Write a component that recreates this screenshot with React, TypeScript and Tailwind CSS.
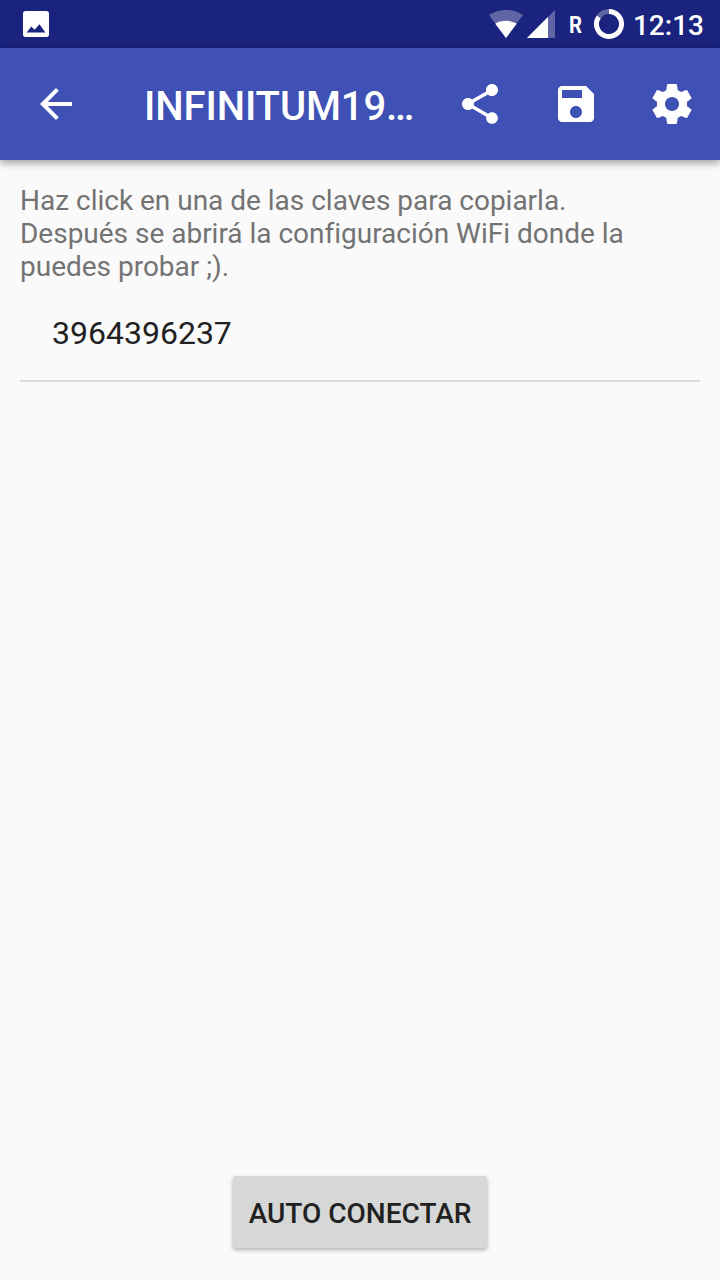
const paths = {
  back: "M20 11H7.83l5.59-5.59L12 4l-8 8 8 8 1.41-1.41L7.83 13H20v-2z",
  share: "M18 16.08c-.76 0-1.44.3-1.96.77L8.91 12.7c.05-.23.09-.46.09-.7s-.04-.47-.09-.7l7.05-4.11c.54.5 1.25.81 2.04.81 1.66 0 3-1.34 3-3s-1.34-3-3-3-3 1.34-3 3c0 .24.04.47.09.7L8.04 9.81C7.5 9.31 6.79 9 6 9c-1.66 0-3 1.34-3 3s1.34 3 3 3c.79 0 1.5-.31 2.04-.81l7.12 4.16c-.05.21-.08.43-.08.65 0 1.61 1.31 2.92 2.92 2.92s2.92-1.31 2.92-2.92-1.31-2.92-2.92-2.92z",
  save: "M17 3H5c-1.11 0-2 .9-2 2v14c0 1.1.89 2 2 2h14c1.1 0 2-.9 2-2V7l-4-4zm-5 16c-1.66 0-3-1.34-3-3s1.34-3 3-3 3 1.34 3 3-1.34 3-3 3zm3-10H5V5h10v4z",
  settings: "M19.43 12.98c.04-.32.07-.64.07-.98s-.03-.66-.07-.98l2.11-1.65c.19-.15.24-.42.12-.64l-2-3.46c-.12-.22-.39-.3-.61-.22l-2.49 1c-.52-.4-1.08-.73-1.69-.98l-.38-2.65C14.46 2.18 14.25 2 14 2h-4c-.25 0-.46.18-.49.42l-.38 2.65c-.61.25-1.17.59-1.69.98l-2.49-1c-.23-.09-.49 0-.61.22l-2 3.46c-.13.22-.07.49.12.64l2.11 1.65c-.04.32-.07.65-.07.98s.03.66.07.98l-2.11 1.65c-.19.15-.24.42-.12.64l2 3.46c.12.22.39.3.61.22l2.49-1c.52.4 1.08.73 1.69.98l.38 2.65c.03.24.24.42.49.42h4c.25 0 .46-.18.49-.42l.38-2.65c.61-.25 1.17-.59 1.69-.98l2.49 1c.23.09.49 0 .61-.22l2-3.46c.12-.22.07-.49-.12-.64l-2.11-1.65zM12 15.5c-1.93 0-3.5-1.57-3.5-3.5s1.57-3.5 3.5-3.5 3.5 1.57 3.5 3.5-1.57 3.5-3.5 3.5z",
};

function Icon({ path, className }: { path: string; className: string }) {
  return (
    <svg viewBox="0 0 24 24" fill="currentColor" className={className} aria-hidden="true">
      <path d={path} />
    </svg>
  );
}

function StatusBar() {
  return (
    <div className="flex h-12 items-center justify-between bg-[#1a237e] pr-4 pl-[23px] text-white">
      <svg width="26" height="26" viewBox="0 0 26 26" fill="white" aria-hidden="true">
        <rect width="26" height="26" rx="2.800" />
        <path d="M3.700 21.500 8.300 15.500 11.500 18.800 16.500 13.200 22.300 21.500Z" fill="#1a237e" />
      </svg>
      <div className="flex items-center">
        <svg width="34" height="28" viewBox="0 0 34 28" fill="white" aria-hidden="true">
          <path d="M0 5C10-1.700 24-1.700 34 5L17 28Z" opacity=".3" />
          <path d="M6.300 13.700C12 9.900 22 9.900 27.700 13.700L17 28Z" />
        </svg>
        <svg width="28" height="28" viewBox="0 0 28 28" fill="white" className="ml-1" aria-hidden="true">
          <path d="M0 28 28 0V28Z" opacity=".3" />
          <path d="M0 28 21 7V28Z" />
        </svg>
        <span className="ml-3.5 w-4 origin-left scale-x-85 pt-0.5 text-[24px] leading-none font-bold">R</span>
        <svg width="32" height="32" viewBox="0 0 32 32" fill="none" stroke="white" strokeWidth="5" className="ml-2" aria-hidden="true">
          <path d="M5.700 8.900A12.500 12.500 0 0 1 16 3.500" opacity=".3" />
          <path d="M16 3.500A12.500 12.500 0 1 1 5.700 8.900" />
        </svg>
        <span className="ml-2 pt-[3px] text-[28px] leading-none font-medium">12:13</span>
      </div>
    </div>
  );
}

export default function App() {
  return (
    <div className="flex h-[1280px] w-[720px] flex-col overflow-hidden bg-[#fafafa] font-['Roboto',sans-serif]">
      <StatusBar />
      <header className="flex h-28 items-center bg-[#3f51b5] text-white shadow-[0_3px_8px_rgba(0,0,0,0.38)]">
        <button className="ml-8" aria-label="Atrás"><Icon path={paths.back} className="size-12" /></button>
        <h1 className="ml-16 w-[288px] pt-1.5 text-[40px] leading-none font-medium tracking-[-0.1px] whitespace-nowrap">INFINITUM19…</h1>
        <div className="ml-6 flex gap-12">
          <button aria-label="Compartir"><Icon path={paths.share} className="size-12" /></button>
          <button aria-label="Guardar"><Icon path={paths.save} className="size-12" /></button>
          <button aria-label="Ajustes"><Icon path={paths.settings} className="size-12" /></button>
        </div>
      </header>
      <main className="flex flex-1 flex-col px-5 pt-6">
        <p className="text-[28px] leading-[33px] tracking-[-0.01px] whitespace-nowrap text-[#737373]">
          Haz click en una de las claves para copiarla.<br />
          Después se abrirá la configuración WiFi donde la<br />
          puedes probar ;).
        </p>
        <div className="flex h-[99px] items-center border-b-2 border-[#dcdcdc] pt-0.5 pl-8 text-[32px] text-[#212121]">3964396237</div>
        <button className="mt-auto mb-8 h-[72px] w-[254px] self-center rounded-[3px] bg-[#d6d7d7] pt-1 text-[28px] font-medium whitespace-nowrap text-[#212121] shadow-[0_2px_4px_rgba(0,0,0,0.3)]">AUTO CONECTAR</button>
      </main>
    </div>
  );
}
